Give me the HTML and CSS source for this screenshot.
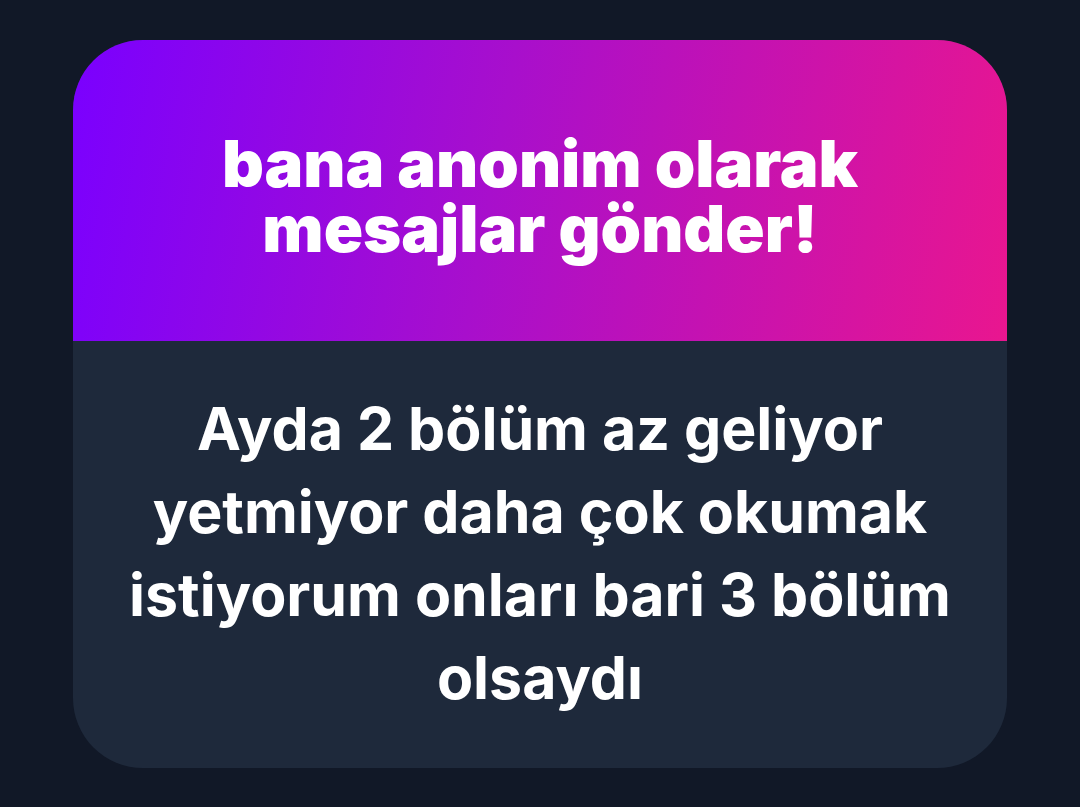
FILE: index.html
```html
<!DOCTYPE html>
<html lang="tr">
<head>
<meta charset="utf-8">
<link rel="stylesheet" href="styles.css">
</head>
<body>
<div class="page">
  <div class="card">
    <div class="head">
      <h1 class="title">bana anonim olarak<br>mesajlar gönder!</h1>
    </div>
    <div class="body">
      <p class="msg">Ayda 2 bölüm az geliyor yetmiyor daha çok okumak istiyorum onları bari 3 bölüm olsaydı</p>
    </div>
  </div>
</div>
</body>
</html>
```

FILE: styles.css
```css
* { box-sizing: border-box; }
html, body { margin: 0; padding: 0; }
body {
  background: #111827;
  width: 1080px;
  height: 807px;
  overflow: hidden;
  font-family: Inter, "Noto Sans", sans-serif;
}
.page {
  padding: 40px 73px 0 73px;
}
.card {
  width: 934px;
  height: 728px;
  border-radius: 70px;
  overflow: hidden;
  background: #1e293b;
  display: flex;
  flex-direction: column;
}
.head {
  height: 301px;
  background: linear-gradient(100deg, #7a00ff 0%, #a80fcc 45%, #e9168f 100%);
  display: flex;
  align-items: center;
  justify-content: center;
  padding-top: 10px;
}
.title {
  margin: 0;
  color: #fff;
  font-size: 65px;
  font-weight: 900;
  line-height: 65px;
  text-align: center;
  letter-spacing: 0;
}
.body {
  flex: 1;
  display: flex;
  align-items: center;
  justify-content: center;
  padding: 0 40px 4px;
}
.msg {
  margin: 0;
  color: #fff;
  font-size: 59px;
  font-weight: 700;
  line-height: 83px;
  text-align: center;
}
```
